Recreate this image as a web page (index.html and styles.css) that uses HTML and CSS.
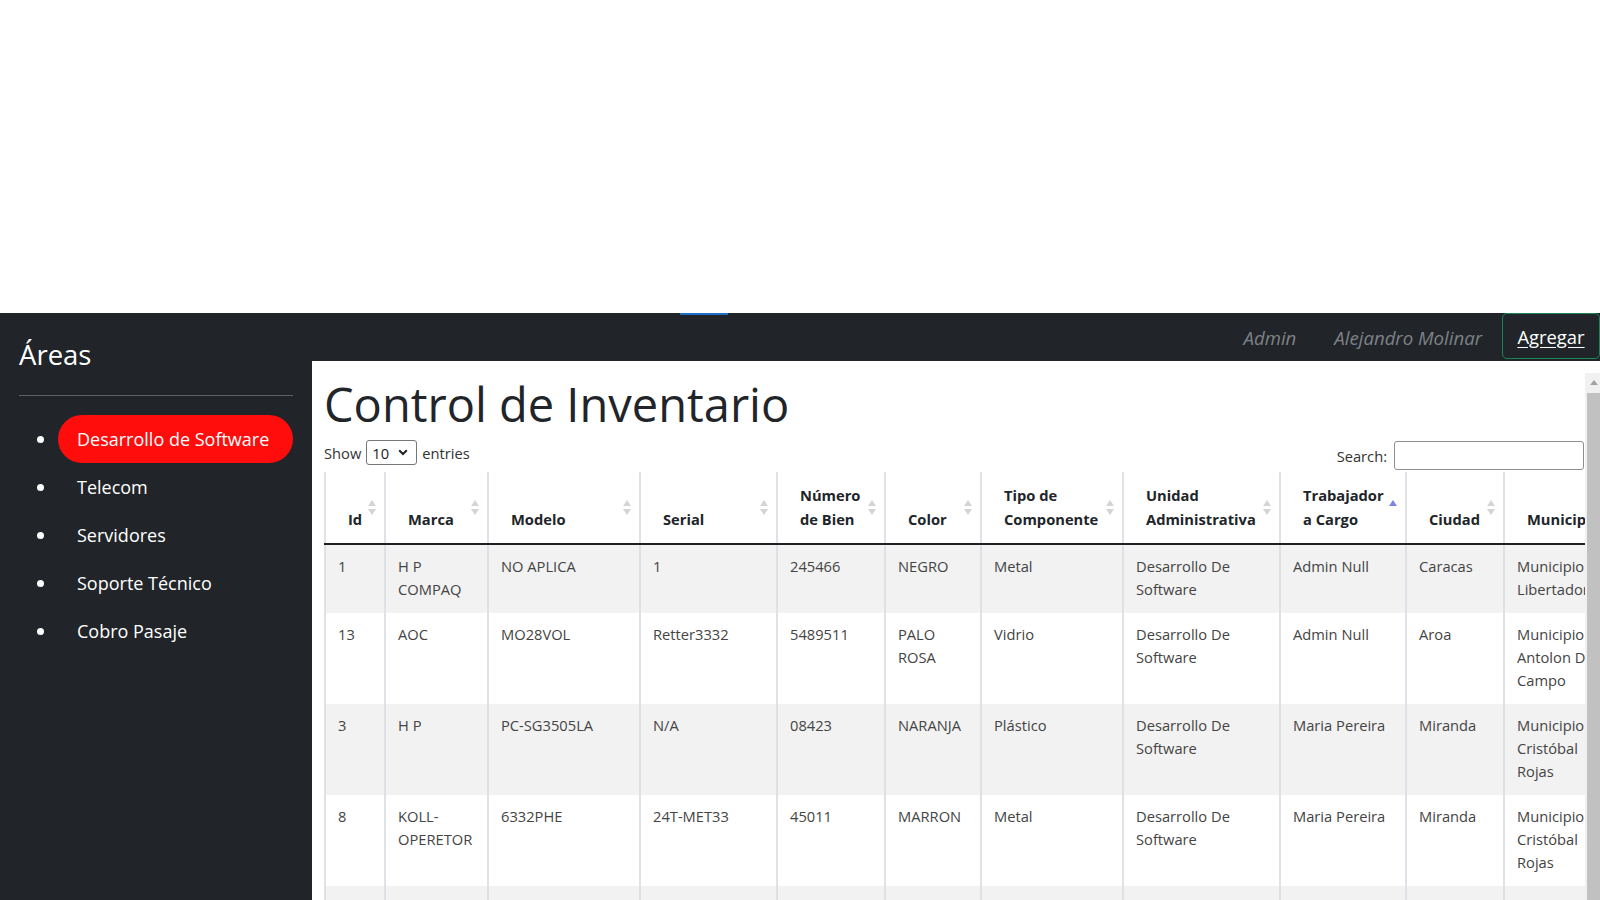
FILE: index.html
```html
<!DOCTYPE html>
<html lang="es">
<head>
<meta charset="utf-8">
<title>Control de Inventario</title>
<link rel="stylesheet" href="styles.css">
</head>
<body>
<div class="topspace"></div>
<div class="layout">
  <aside class="sidebar">
    <h2 class="side-title">Áreas</h2>
    <hr class="side-rule">
    <ul class="side-nav">
      <li class="side-item"><a class="side-link active" href="#">Desarrollo de Software</a></li>
      <li class="side-item"><a class="side-link" href="#">Telecom</a></li>
      <li class="side-item"><a class="side-link" href="#">Servidores</a></li>
      <li class="side-item"><a class="side-link" href="#">Soporte Técnico</a></li>
      <li class="side-item"><a class="side-link" href="#">Cobro Pasaje</a></li>
    </ul>
  </aside>
  <div class="right">
    <nav class="topbar">
      <span class="focus-line"></span>
      <a class="nav-link nav-admin" href="#">Admin</a>
      <a class="nav-link nav-user" href="#">Alejandro Molinar</a>
      <a class="btn-add" href="#">Agregar</a>
    </nav>
    <main class="main">
      <div class="content">
        <h1 class="page-title">Control de Inventario</h1>
        <div class="dt-top">
          <div class="dt-length">
            <span>Show</span>
            <span class="select-wrap">
              <select class="dt-select"><option>10</option><option>25</option><option>50</option></select>
              <svg class="chev" width="10" height="7" viewBox="0 0 10 7"><path d="M1.2 1.3 L5 5 L8.8 1.3" fill="none" stroke="#222" stroke-width="2"/></svg>
            </span>
            <span>entries</span>
          </div>
          <label class="dt-search">Search: <input class="dt-input" type="text"></label>
        </div>
        <table class="dt">
          <colgroup>
            <col class="c-id"><col class="c-marca"><col class="c-modelo"><col class="c-serial"><col class="c-num"><col class="c-color"><col class="c-tipo"><col class="c-unidad"><col class="c-trab"><col class="c-ciudad"><col class="c-mun"><col class="c-est">
          </colgroup>
          <thead>
            <tr>
              <th class="sort">Id</th>
              <th class="sort">Marca</th>
              <th class="sort">Modelo</th>
              <th class="sort">Serial</th>
              <th class="sort">Número de Bien</th>
              <th class="sort">Color</th>
              <th class="sort">Tipo de Componente</th>
              <th class="sort">Unidad Administrativa</th>
              <th class="sort asc">Trabajador a Cargo</th>
              <th class="sort">Ciudad</th>
              <th class="sort">Municipio</th>
              <th class="sort">Estado</th>
            </tr>
          </thead>
          <tbody>
            <tr>
              <td>1</td><td>H P COMPAQ</td><td>NO APLICA</td><td>1</td><td>245466</td><td>NEGRO</td><td>Metal</td><td>Desarrollo De Software</td><td>Admin Null</td><td>Caracas</td><td>Municipio Libertador</td><td>Distrito Capital</td>
            </tr>
            <tr>
              <td>13</td><td>AOC</td><td>MO28VOL</td><td>Retter3332</td><td>5489511</td><td>PALO ROSA</td><td>Vidrio</td><td>Desarrollo De Software</td><td>Admin Null</td><td>Aroa</td><td>Municipio Antolon Del Campo</td><td>Nueva Esparta</td>
            </tr>
            <tr>
              <td>3</td><td>H P</td><td>PC-SG3505LA</td><td>N/A</td><td>08423</td><td>NARANJA</td><td>Plástico</td><td>Desarrollo De Software</td><td>Maria Pereira</td><td>Miranda</td><td>Municipio Cristóbal Rojas</td><td>Miranda</td>
            </tr>
            <tr>
              <td>8</td><td>KOLL-OPERETOR</td><td>6332PHE</td><td>24T-MET33</td><td>45011</td><td>MARRON</td><td>Metal</td><td>Desarrollo De Software</td><td>Maria Pereira</td><td>Miranda</td><td>Municipio Cristóbal Rojas</td><td>Miranda</td>
            </tr>
            <tr>
              <td>9</td><td>DELL</td><td>OPTIPLEX</td><td>X77-PLE</td><td>33021</td><td>NEGRO</td><td>Metal</td><td>Desarrollo De Software</td><td>Maria Pereira</td><td>Miranda</td><td>Municipio Cristóbal Rojas</td><td>Miranda</td>
            </tr>
            <tr>
              <td>11</td><td>LG</td><td>FLATRON</td><td>LG-4410</td><td>77120</td><td>GRIS</td><td>Plástico</td><td>Desarrollo De Software</td><td>Maria Pereira</td><td>Caracas</td><td>Municipio Libertador</td><td>Distrito Capital</td>
            </tr>
          </tbody>
        </table>
        <div class="dt-bottom">Showing 1 to 6 of 6 entries</div>
      </div>
      <div class="vscroll" aria-hidden="true">
        <div class="vs-up"><span class="vs-arrow"></span></div>
        <div class="vs-thumb"></div>
      </div>
    </main>
  </div>
</div>
</body>
</html>
```
FILE: styles.css
```css
* { box-sizing: border-box; }

html, body {
  margin: 0;
  height: 900px;
  overflow: hidden;
  background: #fff;
  font-family: "Open Sans", "Noto Sans", sans-serif;
  color: #212529;
}

.topspace { height: 313px; }

.layout {
  display: flex;
  height: 900px;
}

/* Sidebar */
.sidebar {
  width: 312px;
  flex: 0 0 312px;
  background: #212529;
  padding: 0 19px;
  color: #fff;
}

.side-title {
  margin: 24px 0 0;
  font-size: 27.5px;
  line-height: 35px;
  font-weight: 400;
}

.side-rule {
  margin: 23px 0 0;
  border: 0;
  border-top: 1px solid #5d6166;
  height: 0;
}

.side-nav {
  list-style: none;
  margin: 19px 0 0;
  padding: 0;
}

.side-item {
  display: flex;
  align-items: center;
  height: 48px;
}

.side-item::before {
  content: "";
  width: 7px;
  height: 7px;
  border-radius: 50%;
  background: #fff;
  margin-left: 18px;
  margin-right: 14px;
  flex: 0 0 7px;
}

.side-link {
  flex: 1;
  display: flex;
  align-items: center;
  height: 48px;
  padding: 0 19px;
  border-radius: 24px;
  color: #fff;
  text-decoration: none;
  font-size: 18px;
}

.side-link.active { background: #ff0c0c; }

/* Right column */
.right {
  flex: 1;
  min-width: 0;
  display: flex;
  flex-direction: column;
}

.topbar {
  position: relative;
  height: 48px;
  flex: 0 0 48px;
  background: #212529;
  display: flex;
  justify-content: flex-end;
  align-items: center;
}

.focus-line {
  position: absolute;
  left: 368px;
  top: 0;
  width: 48px;
  height: 2px;
  background: #1c6ec7;
}

.nav-link {
  color: #7e8286;
  font-style: italic;
  font-size: 18.6px;
  text-decoration: none;
  margin-top: 1px;
}

.nav-admin { margin-right: 38px; }
.nav-user { margin-right: 20px; }

.btn-add {
  align-self: flex-start;
  width: 98px;
  height: 46px;
  border: 1px solid #198754;
  border-radius: 5px;
  display: flex;
  align-items: center;
  justify-content: center;
  color: #fff;
  font-size: 18.4px;
  text-decoration: underline;
  text-underline-offset: 3px;
}

/* Main */
.main {
  flex: 1;
  min-height: 0;
  background: #fff;
  padding: 12px 0 0 12px;
  display: flex;
  overflow: hidden;
}

.content {
  flex: 1;
  min-width: 0;
  overflow: hidden;
}

.vscroll {
  flex: 0 0 15px;
  width: 15px;
  background: #f1f1f1;
  display: flex;
  flex-direction: column;
}

.vs-up {
  height: 20px;
  flex: 0 0 20px;
  display: flex;
  justify-content: center;
  padding-left: 3px;
  padding-top: 7px;
}

.vs-arrow {
  width: 0;
  height: 0;
  border-left: 4.5px solid transparent;
  border-right: 4.5px solid transparent;
  border-bottom: 5px solid #a3a3a3;
}

.vs-thumb {
  flex: 1;
  margin-left: 2px;
  background: #c1c1c1;
}

.page-title {
  margin: 4px 0 0;
  font-size: 47px;
  line-height: 54px;
  font-weight: 500;
  color: #212529;
}

.dt-top {
  height: 41px;
  display: flex;
  justify-content: space-between;
  align-items: flex-start;
  font-size: 14.7px;
  color: #333;
}

.dt-length {
  display: flex;
  align-items: center;
  gap: 5px;
  margin-top: 9px;
  height: 25px;
}

.select-wrap {
  position: relative;
  display: inline-block;
  width: 51px;
  height: 25px;
}

.dt-select {
  appearance: none;
  -webkit-appearance: none;
  width: 51px;
  height: 25px;
  border: 1px solid #767676;
  border-radius: 3px;
  background: #fff;
  padding: 0 0 0 5px;
  font-family: inherit;
  font-size: 14.7px;
  color: #222;
}

.chev {
  position: absolute;
  right: 9px;
  top: 9px;
  pointer-events: none;
}

.dt-search {
  display: flex;
  align-items: center;
  gap: 7px;
  margin-top: 10px;
  margin-right: 1px;
}

.dt-input {
  width: 190px;
  height: 29px;
  border: 1px solid #8f8f8f;
  border-radius: 3px;
}

/* Table */
.dt {
  table-layout: fixed;
  border-collapse: collapse;
  width: 1445px;
  font-size: 14.7px;
  line-height: 24px;
}

.c-id { width: 60px; }
.c-marca { width: 103px; }
.c-modelo { width: 152px; }
.c-serial { width: 137px; }
.c-num { width: 108px; }
.c-color { width: 96px; }
.c-tipo { width: 142px; }
.c-unidad { width: 157px; }
.c-trab { width: 126px; }
.c-ciudad { width: 98px; }
.c-mun { width: 116px; }
.c-est { width: 150px; }

.dt th,
.dt td {
  border-left: 2px solid #dee2e6;
  border-right: 2px solid #dee2e6;
}

.dt th {
  position: relative;
  text-align: left;
  vertical-align: bottom;
  font-weight: 700;
  color: #212529;
  padding: 11px 18px 12px 22px;
  border-bottom: 2px solid #1d1f21;
}

.dt td {
  vertical-align: top;
  padding: 10px 10px 12px 12px;
  line-height: 23px;
  color: #444;
}

.dt tbody tr:nth-child(odd) td { background: #f2f2f2; }

.sort::before,
.sort::after {
  content: "";
  position: absolute;
  right: 8px;
  width: 0;
  height: 0;
  border-left: 4.5px solid transparent;
  border-right: 4.5px solid transparent;
}

.sort::before {
  top: 28px;
  border-bottom: 6.5px solid #d4d4d4;
}

.sort::after {
  top: 37px;
  border-top: 6.5px solid #d4d4d4;
}

.sort.asc::before { border-bottom-color: #7d84e3; }
.sort.asc::after { display: none; }

.dt-bottom {
  padding: 14px 0 40px;
  font-size: 14.7px;
  color: #333;
}
```
